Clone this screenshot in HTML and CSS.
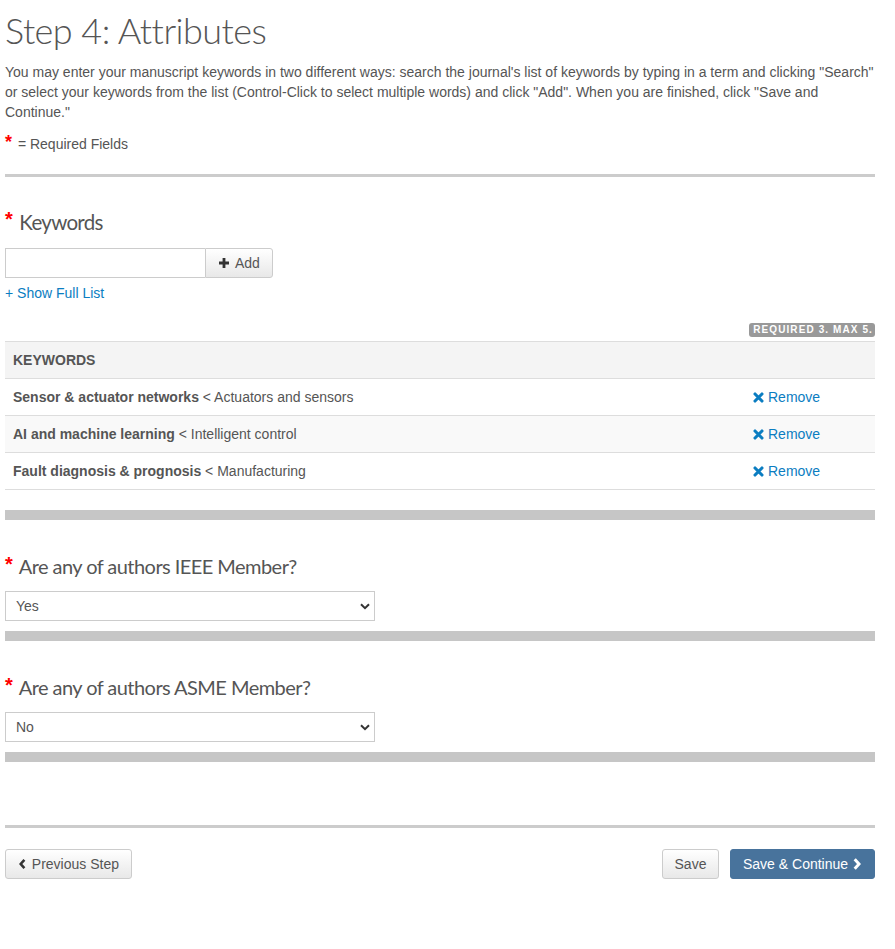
FILE: index.html
```html
<!DOCTYPE html>
<html lang="en">
<head>
<meta charset="utf-8">
<title>Step 4: Attributes</title>
<link rel="stylesheet" href="styles.css">
</head>
<body>
<div class="page">
  <h1 class="title">Step 4: Attributes</h1>
  <p class="intro">You may enter your manuscript keywords in two different ways: search the journal's list of keywords by typing in a term and clicking "Search" or select your keywords from the list (Control-Click to select multiple words) and click "Add". When you are finished, click "Save and Continue."</p>
  <p class="req-note"><span class="req">*</span> = Required Fields</p>
  <div class="hr"></div>

  <h2 class="field-title first"><span class="req">*</span> Keywords</h2>
  <div class="input-group">
    <input class="kw-input" type="text">
    <button class="btn btn-add" type="button">
      <svg class="ico-plus" viewBox="0 0 10 10" width="10" height="10"><path d="M3.6 0h2.8v3.6H10v2.8H6.4V10H3.6V6.4H0V3.6h3.6z" fill="#333"/></svg><span>Add</span>
    </button>
  </div>
  <a class="show-list" href="#">+ Show Full List</a>

  <div class="badge-row"><span class="badge">REQUIRED 3. MAX 5.</span></div>
  <div class="kw-table">
    <div class="kw-row head"><div class="cell">KEYWORDS</div><div class="cell"></div></div>
    <div class="kw-row"><div class="cell"><b>Sensor &amp; actuator networks</b> &lt; Actuators and sensors</div><div class="cell"><a class="remove" href="#"><svg viewBox="0 0 12 12" width="11" height="11"><path d="M2.2 2.2L9.8 9.8M9.8 2.2L2.2 9.8" stroke="#0b7dc1" stroke-width="3.4" stroke-linecap="round"/></svg><span>Remove</span></a></div></div>
    <div class="kw-row alt"><div class="cell"><b>AI and machine learning</b> &lt; Intelligent control</div><div class="cell"><a class="remove" href="#"><svg viewBox="0 0 12 12" width="11" height="11"><path d="M2.2 2.2L9.8 9.8M9.8 2.2L2.2 9.8" stroke="#0b7dc1" stroke-width="3.4" stroke-linecap="round"/></svg><span>Remove</span></a></div></div>
    <div class="kw-row"><div class="cell"><b>Fault diagnosis &amp; prognosis</b> &lt; Manufacturing</div><div class="cell"><a class="remove" href="#"><svg viewBox="0 0 12 12" width="11" height="11"><path d="M2.2 2.2L9.8 9.8M9.8 2.2L2.2 9.8" stroke="#0b7dc1" stroke-width="3.4" stroke-linecap="round"/></svg><span>Remove</span></a></div></div>
  </div>
  <div class="bar"></div>

  <h2 class="field-title q"><span class="req">*</span> Are any of authors IEEE Member?</h2>
  <div class="select-wrap">
    <select class="sel"><option>Yes</option><option>No</option></select>
    <svg class="chev" viewBox="0 0 10 7" width="10" height="7"><path d="M1 1.2L5 5.2L9 1.2" fill="none" stroke="#333" stroke-width="2"/></svg>
  </div>
  <div class="bar"></div>

  <h2 class="field-title q"><span class="req">*</span> Are any of authors ASME Member?</h2>
  <div class="select-wrap">
    <select class="sel"><option>No</option><option>Yes</option></select>
    <svg class="chev" viewBox="0 0 10 7" width="10" height="7"><path d="M1 1.2L5 5.2L9 1.2" fill="none" stroke="#333" stroke-width="2"/></svg>
  </div>
  <div class="bar"></div>

  <div class="hr hr-bottom"></div>
  <div class="footer">
    <button class="btn btn-prev" type="button"><svg viewBox="0 0 8 12" width="8" height="12"><path d="M6.3 1.2L2 6L6.3 10.8" fill="none" stroke="#333" stroke-width="3"/></svg><span>Previous Step</span></button>
    <div class="right">
      <button class="btn btn-save" type="button">Save</button>
      <button class="btn btn-primary" type="button"><span>Save &amp; Continue</span><svg viewBox="0 0 8 12" width="8" height="12"><path d="M1.7 1.2L6 6L1.7 10.8" fill="none" stroke="#fff" stroke-width="3"/></svg></button>
    </div>
  </div>
</div>
</body>
</html>
```

FILE: styles.css
```css
* { box-sizing: border-box; }
body {
  margin: 0;
  background: #fff;
  font-family: "Liberation Sans", Arial, sans-serif;
  font-size: 14px;
  color: #555;
}
.page {
  width: 870px;
  margin-left: 5px;
}
.title {
  margin: 10px 0 0;
  font-family: Lato, "Open Sans", sans-serif;
  font-weight: 300;
  font-size: 36px;
  line-height: 40px;
  color: #555;
  letter-spacing: -0.55px;
}
.intro {
  margin: 12px 0 0;
  line-height: 20px;
}
.req-note {
  margin: 12px 0 0;
  line-height: 20px;
}
.req-note .req { margin-right: 2px; }
.req {
  color: #f00;
  font-weight: bold;
  font-size: 18px;
  font-family: "Liberation Sans", Arial, sans-serif;
  vertical-align: top;
  line-height: 16px;
  letter-spacing: 0;
}
.hr {
  height: 3px;
  background: #ccc;
  margin-top: 20px;
}
.field-title {
  margin: 0;
  font-family: Lato, "Open Sans", sans-serif;
  font-weight: 400;
  color: #555;
}
.field-title .req { font-size: 20px; line-height: 24px; margin-right: 2px; }
.field-title.first {
  margin-top: 30px;
  font-size: 20.5px;
  line-height: 30px;
  letter-spacing: -0.7px;
}
.field-title.q {
  margin-top: 32px;
  font-size: 20px;
  line-height: 28px;
  letter-spacing: -0.55px;
}
.input-group {
  display: flex;
  margin-top: 11px;
  height: 30px;
}
.kw-input {
  width: 200px;
  height: 30px;
  border: 1px solid #ccc;
  border-right: none;
  margin: 0;
  padding: 0 8px;
}
.btn {
  font-family: "Liberation Sans", Arial, sans-serif;
  font-size: 14px;
  height: 30px;
  border: 1px solid #ccc;
  border-radius: 3px;
  background: linear-gradient(#fff, #e8e8e8);
  color: #555;
  display: inline-flex;
  align-items: center;
  padding: 0 12px;
  margin: 0;
  white-space: nowrap;
  cursor: pointer;
}
.btn-add {
  width: 68px;
  border-radius: 0 3px 3px 0;
  padding: 0 0 0 13px;
  gap: 6px;
}
.show-list {
  display: block;
  margin-top: 5px;
  line-height: 20px;
  color: #0b7dc1;
  text-decoration: none;
}
.badge-row {
  display: flex;
  justify-content: flex-end;
  margin-top: 20px;
}
.badge {
  display: inline-block;
  background: #999;
  color: #fff;
  font-weight: bold;
  font-size: 10px;
  line-height: 14px;
  height: 14px;
  letter-spacing: 1.1px;
  padding: 0 2px 0 4px;
  border-radius: 3px;
}
.kw-table {
  margin-top: 4px;
  border-bottom: 1px solid #ddd;
}
.kw-row {
  display: grid;
  grid-template-columns: 740px 130px;
  border-top: 1px solid #ddd;
}
.kw-row .cell {
  padding: 8px 8px;
  line-height: 20px;
  height: 36px;
}
.kw-row.head { background: #f4f4f4; font-weight: bold; }
.kw-row.alt { background: #f9f9f9; }
.kw-row b { color: #555; }
.remove {
  color: #0b7dc1;
  text-decoration: none;
  display: flex;
  align-items: center;
  gap: 4px;
  height: 20px;
}
.bar {
  height: 10px;
  background: #c6c6c6;
  margin-top: 20px;
}
.select-wrap + .bar { margin-top: 10px; }
.select-wrap {
  position: relative;
  width: 370px;
  margin-top: 11px;
}
.sel {
  display: block;
  width: 370px;
  height: 30px;
  border: 1px solid #ccc;
  border-radius: 0;
  background: #fff;
  appearance: none;
  -webkit-appearance: none;
  padding: 0 0 0 10px;
  margin: 0;
  font-family: "Liberation Sans", Arial, sans-serif;
  font-size: 14px;
  color: #555;
}
.chev {
  position: absolute;
  right: 5px;
  top: 12px;
  pointer-events: none;
}
.hr-bottom { margin-top: 63px; }
.footer {
  display: flex;
  justify-content: space-between;
  margin-top: 21px;
}
.btn-prev { width: 127px; padding-left: 13px; gap: 6px; }
.right { display: flex; gap: 11px; }
.btn-save { width: 57px; justify-content: center; padding: 0; }
.btn-primary {
  width: 145px;
  background: #48739c;
  border-color: #48739c;
  color: #fff;
  padding-left: 12px;
  gap: 5px;
}
```
